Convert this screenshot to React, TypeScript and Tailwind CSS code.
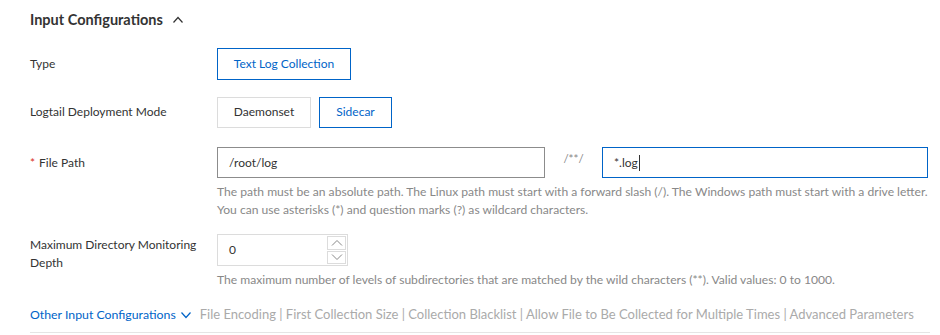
import React from "react";

const font = { fontFamily: 'Lato, "Open Sans", sans-serif' };

function Label({ children }: { children: React.ReactNode }) {
  return <div className="w-[187px] shrink-0 text-[12px] leading-[18px] text-[#333]">{children}</div>;
}

export default function App() {
  return (
    <div className="w-[940px] h-[335px] bg-white overflow-hidden pl-[30px] pr-[10px]" style={font}>
      {/* title */}
      <div className="h-[40px] flex items-center gap-[9px] text-[14.5px] font-bold text-[#333]">
        <span>Input Configurations</span>
        <svg width="12" height="12" viewBox="0 0 12 12" fill="none" stroke="#333" strokeWidth="1.2">
          <path d="M1.5 8.5 L6 3.5 L10.5 8.5" />
        </svg>
      </div>

      {/* type */}
      <div className="mt-[8px] flex items-center h-[32px]">
        <Label>Type</Label>
        <button className="h-[32px] w-[134px] border border-[#0064c8] text-[#0064c8] text-[12px] bg-white">Text Log Collection</button>
      </div>

      {/* deployment */}
      <div className="mt-[16px] flex items-center h-[32px]">
        <Label>Logtail Deployment Mode</Label>
        <div className="flex gap-[8px]">
          <button className="h-[31px] w-[94px] border border-[#dcdcdc] text-[#333] text-[12px] bg-white">Daemonset</button>
          <button className="h-[31px] w-[73px] border border-[#0064c8] text-[#0064c8] text-[12px] bg-white">Sidecar</button>
        </div>
      </div>

      {/* file path */}
      <div className="mt-[19px] flex items-start">
        <div className="w-[187px] shrink-0 pt-[7px] text-[12px] leading-[18px] text-[#333]">
          <span className="text-[#d93026] mr-[4px]">*</span>File Path
        </div>
        <div className="flex flex-col">
          <div className="flex items-start">
            <div className="h-[31px] w-[328px] border border-[#8c8c8c] flex items-center px-[11px] text-[12px] text-[#333]">/root/log</div>
            <div className="w-[57px] text-center text-[11.5px] text-[#888] pt-[3px]">/**/</div>
            <div className="h-[31px] w-[326px] border border-[#0064c8] flex items-center px-[11px] text-[12px] text-[#333]">
              *.log<span className="inline-block w-px h-[16px] bg-[#333] ml-px" />
            </div>
          </div>
          <div className="mt-[5px] text-[12.1px] leading-[18px] text-[#888] whitespace-nowrap">
            <div>The path must be an absolute path. The Linux path must start with a forward slash (/). The Windows path must start with a drive letter.</div>
            <div>You can use asterisks (*) and question marks (?) as wildcard characters.</div>
          </div>
        </div>
      </div>

      {/* depth */}
      <div className="mt-[15px] flex items-start">
        <div className="w-[187px] shrink-0 pt-[2px] text-[12px] leading-[18px] text-[#333] pr-[10px]">
          Maximum Directory Monitoring Depth
        </div>
        <div className="flex flex-col">
          <div className="h-[32px] w-[131px] border border-[#dcdcdc] flex">
            <div className="flex-1 flex items-center px-[11px] text-[12px] text-[#333]">0</div>
            <div className="w-[20px] flex flex-col gap-[1px] py-[1px] pr-[1px]">
              <div className="flex-1 border border-[#dcdcdc] flex items-center justify-center">
                <svg width="12" height="8" viewBox="0 0 12 8" fill="none" stroke="#888" strokeWidth="1">
                  <path d="M1 6.5 L6 1.5 L11 6.5" />
                </svg>
              </div>
              <div className="flex-1 border border-[#dcdcdc] flex items-center justify-center">
                <svg width="12" height="8" viewBox="0 0 12 8" fill="none" stroke="#888" strokeWidth="1">
                  <path d="M1 1.5 L6 6.5 L11 1.5" />
                </svg>
              </div>
            </div>
          </div>
          <div className="mt-[5px] text-[12.1px] leading-[18px] text-[#888] whitespace-nowrap">
            The maximum number of levels of subdirectories that are matched by the wild characters (**). Valid values: 0 to 1000.
          </div>
        </div>
      </div>

      {/* other */}
      <div className="mt-[9px] w-[900px] border-b border-[#e5e5e5] h-[35px] flex items-center whitespace-nowrap">
        <span className="text-[#0064c8] text-[12.3px]">Other Input Configurations</span>
        <svg className="ml-[4px] mr-[8px]" width="12" height="12" viewBox="0 0 12 12" fill="none" stroke="#0064c8" strokeWidth="1.2">
          <path d="M1.5 3.5 L6 8.5 L10.5 3.5" />
        </svg>
        <span className="text-[#aaa] text-[13px]">File Encoding | First Collection Size | Collection Blacklist | Allow File to Be Collected for Multiple Times | Advanced Parameters</span>
      </div>
    </div>
  );
}
